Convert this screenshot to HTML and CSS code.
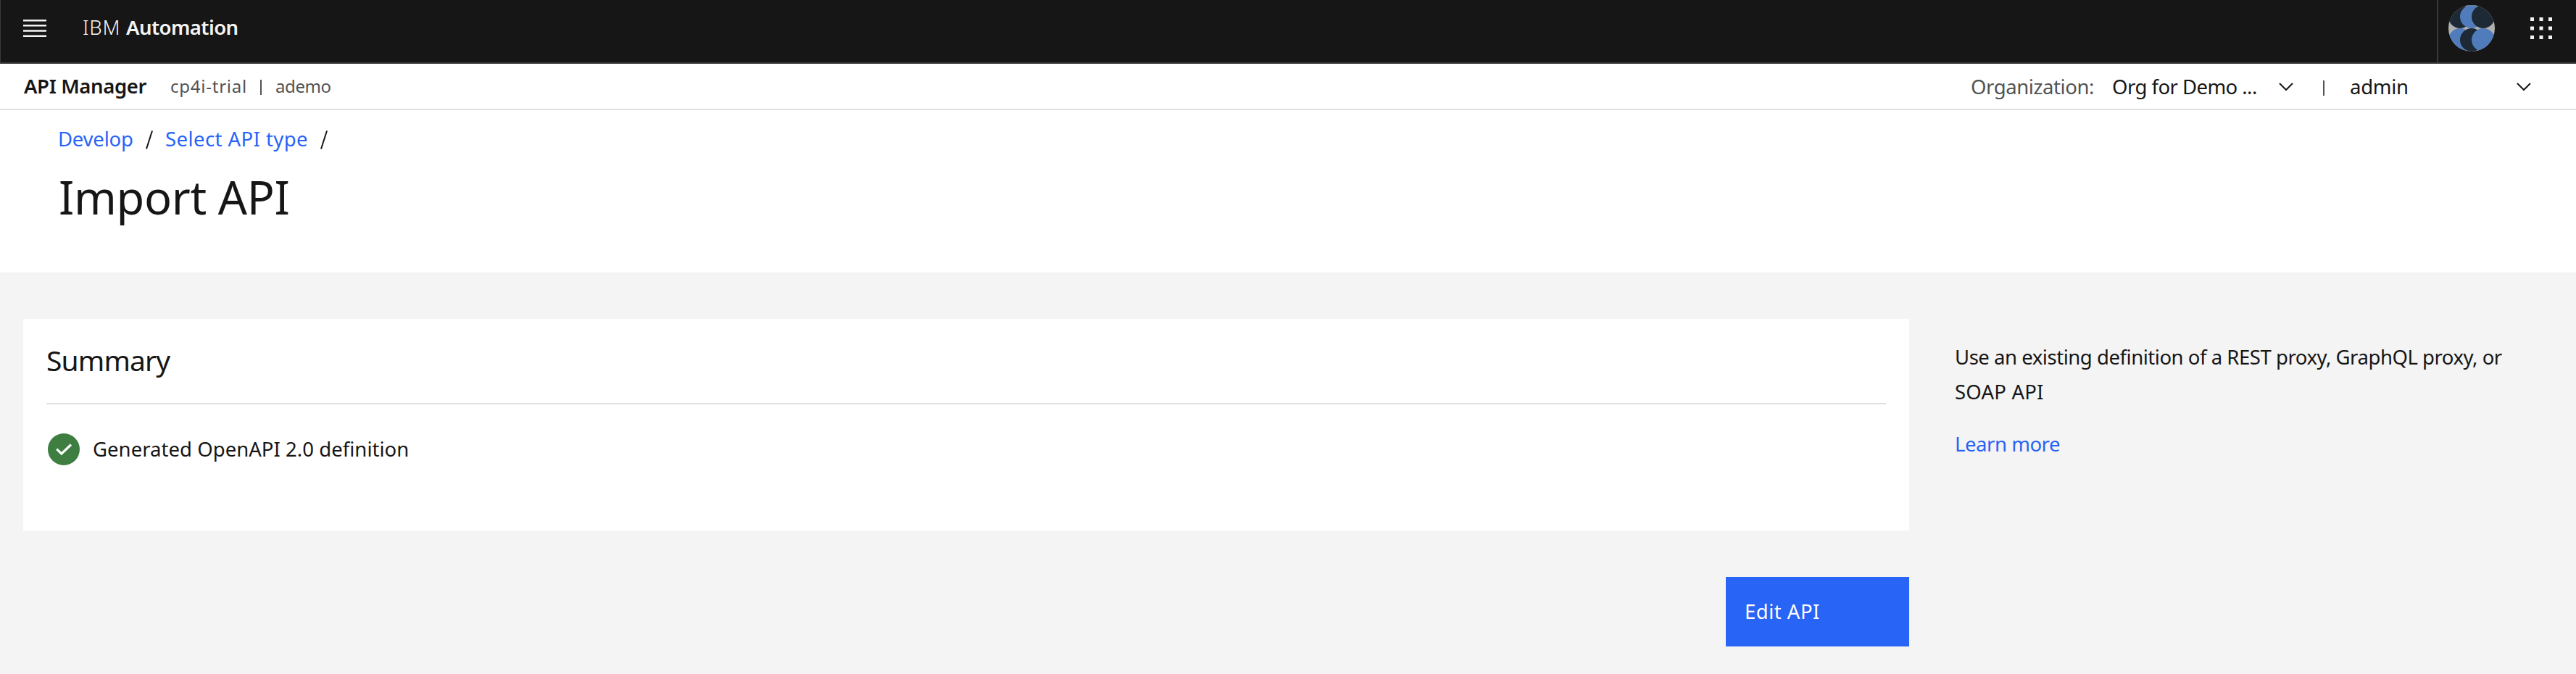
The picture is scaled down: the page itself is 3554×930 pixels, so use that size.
FILE: index.html
```
<!DOCTYPE html>
<html lang="en">
<head>
<meta charset="utf-8">
<title>Import API</title>
<link rel="stylesheet" href="styles.css">
</head>
<body>
<header class="shell">
  <svg class="menu" width="32" height="24" viewBox="0 0 32 24">
    <path fill="#f4f4f4" d="M0 0h32v2.5H0zM0 7.1h32v2.5H0zM0 14.3h32v2.5H0zM0 21.5h32v2.5H0z"/>
  </svg>
  <span class="brand brand-ibm">IBM</span>
  <span class="brand brand-name">Automation</span>
  <div class="shell-actions">
    <svg class="avatar" width="64" height="64" viewBox="0 0 64 64">
      <defs><clipPath id="disc"><circle cx="32" cy="32" r="32"/></clipPath></defs>
      <g clip-path="url(#disc)">
        <rect width="64" height="64" fill="#b0b0b0"/>
        <circle cx="16" cy="16" r="16" fill="#1d2a35"/>
        <circle cx="32" cy="16" r="16" fill="#507cbb"/>
        <circle cx="48" cy="16" r="16" fill="#1d2a35"/>
        <circle cx="16" cy="48" r="16" fill="#507cbb"/>
        <circle cx="32" cy="48" r="16" fill="#1d2a35"/>
        <circle cx="48" cy="48" r="16" fill="#507cbb"/>
      </g>
    </svg>
    <svg class="switcher" width="30" height="30" viewBox="0 0 30 30">
      <path fill="#f4f4f4" d="M0 0h5v5H0zM12.5 0h5v5h-5zM25 0h5v5h-5zM0 12.5h5v5H0zM12.5 12.5h5v5h-5zM25 12.5h5v5h-5zM0 25h5v5H0zM12.5 25h5v5h-5zM25 25h5v5h-5z"/>
    </svg>
  </div>
</header>

<div class="subheader">
  <strong class="product">API Manager</strong>
  <span class="instance">cp4i-trial</span>
  <i class="rule rule-instance"></i>
  <span class="instance user">ademo</span>
  <div class="context">
    <span class="org-label">Organization:</span>
    <span class="org-value">Org for Demo ...</span>
    <svg class="chevron" width="20" height="12" viewBox="0 0 20 12"><path d="M1 1l9 9 9-9" fill="none" stroke="#161616" stroke-width="2"/></svg>
    <i class="rule rule-context"></i>
    <span class="role">admin</span>
    <svg class="chevron" width="20" height="12" viewBox="0 0 20 12"><path d="M1 1l9 9 9-9" fill="none" stroke="#161616" stroke-width="2"/></svg>
  </div>
</div>

<section class="page-head">
  <nav class="crumbs">
    <a class="crumb-develop">Develop</a>
    <svg class="slash" width="10" height="26" viewBox="0 0 10 26"><path d="M9 .5L1 25.5" stroke="#161616" stroke-width="2"/></svg>
    <a class="crumb-type">Select API type</a>
    <svg class="slash" width="10" height="26" viewBox="0 0 10 26"><path d="M9 .5L1 25.5" stroke="#161616" stroke-width="2"/></svg>
  </nav>
  <h1>Import API</h1>
</section>

<main class="content">
  <div class="primary">
    <section class="card">
      <h2>Summary</h2>
      <div class="result">
        <svg width="44" height="44" viewBox="0 0 44 44">
          <circle cx="22" cy="22" r="22" fill="#3e7e41"/>
          <path d="M12.3 21.6l6.5 6.5L32 15.500" fill="none" stroke="#fff" stroke-width="3.200"/>
        </svg>
        <span>Generated OpenAPI 2.0 definition</span>
      </div>
    </section>
    <button class="edit"><span>Edit API</span></button>
  </div>
  <aside>
    <p><span class="help-first">Use an existing definition of a REST proxy, GraphQL proxy, or</span> <span class="help-last">SOAP API</span></p>
    <a class="learn">Learn more</a>
  </aside>
</main>
</body>
</html>
```
FILE: styles.css
```
* { box-sizing: border-box; }
body {
  margin: 0;
  height: 930px;
  overflow: hidden;
  background: #f4f4f4;
  color: #161616;
  font: 27.5px/48px "Noto Sans", sans-serif;
  white-space: nowrap;
}
h1, h2, p { margin: 0; font-weight: 400; }
svg { display: block; flex: none; }
a { color: #2864f5; }

.shell {
  display: flex;
  height: 88px;
  padding: 0 33px 10px 31px;
  border-left: 1px solid #393939;
  border-bottom: 2px solid #393939;
  background: #161616;
  color: #f4f4f4;
  align-items: center;
}
.menu { margin-top: 2px; }
.brand { display: block; }
.brand-ibm { width: 60px; margin-left: 50px; letter-spacing: .8px; font-weight: 300; }
.brand-name { font-weight: 600; letter-spacing: -.55px; }
.shell-actions {
  display: flex;
  align-items: center;
  align-self: flex-start;
  height: 86px;
  margin-left: auto;
  padding: 0 0 8px 14px;
  border-left: 2px solid #393939;
}
.switcher { margin-left: 49px; }

.subheader {
  display: flex;
  align-items: center;
  height: 64px;
  padding: 0 62px 0 33px;
  border-bottom: 2px solid #e0e0e0;
  background: #fff;
}
.product { width: 202px; font-weight: 600; letter-spacing: -.38px; }
.instance { width: 124px; font-size: 24px; letter-spacing: .76px; color: #525252; }
.user { letter-spacing: -.4px; }
.rule { display: block; width: 2px; height: 21px; background: #525252; }
.rule-instance { margin: 2px 19px 0 0; }
.context { display: flex; align-items: center; margin-left: auto; padding-top: 2px; }
.org-label { width: 195px; letter-spacing: -.42px; color: #525252; }
.org-value { width: 230px; letter-spacing: -.54px; }
.rule-context { margin: 2px 35px 0 41px; }
.role { width: 230px; letter-spacing: -.29px; }

.page-head { height: 224px; padding: 16px 80px 0; background: #fff; }
.crumbs { display: flex; align-items: center; }
.crumb-develop { width: 121px; letter-spacing: -.21px; }
.crumb-type { width: 214px; margin-left: 17px; letter-spacing: .43px; }
.slash { margin-top: 1px; }
h1 { margin-left: 1px; padding-top: 16px; font-size: 63px; line-height: 80px; letter-spacing: -.35px; }

.content { display: flex; padding: 64px 32px 0; }
.primary { width: 2602px; }
.card { height: 292px; padding: 32px; background: #fff; }
h2 { height: 86px; border-bottom: 2px solid #e0e0e0; font-size: 39px; line-height: 50px; letter-spacing: -.85px; }
.result { display: flex; align-items: center; gap: 18px; height: 44px; margin: 40px 0 0 2px; letter-spacing: .04px; }
.edit {
  display: block;
  width: 253px;
  height: 96px;
  margin: 64px 0 0 auto;
  padding: 0 26px;
  border: 0;
  background: #2864f5;
  color: #fff;
  font: inherit;
  text-align: left;
  letter-spacing: .49px;
}
aside { padding: 29px 0 0 63px; }
aside p { width: 760px; white-space: normal; }
aside span { display: block; }
.help-first { letter-spacing: -.46px; white-space: nowrap; }
.help-last { letter-spacing: .2px; }
.learn { display: block; margin-top: 24px; letter-spacing: -.45px; }
```
